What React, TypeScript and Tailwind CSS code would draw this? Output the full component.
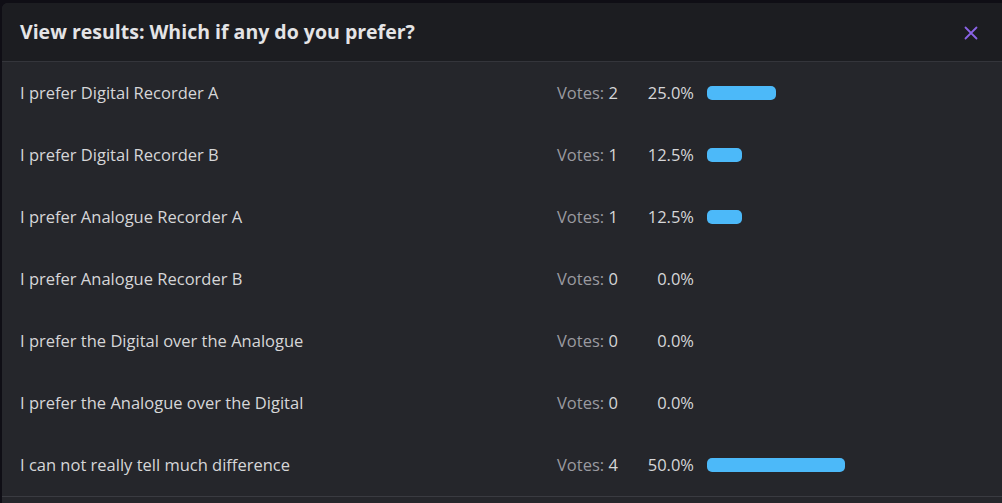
import React from 'react';

const rows = [
  { label: 'I prefer Digital Recorder A', votes: 2 },
  { label: 'I prefer Digital Recorder B', votes: 1 },
  { label: 'I prefer Analogue Recorder A', votes: 1 },
  { label: 'I prefer Analogue Recorder B', votes: 0 },
  { label: 'I prefer the Digital over the Analogue', votes: 0 },
  { label: 'I prefer the Analogue over the Digital', votes: 0 },
  { label: 'I can not really tell much difference', votes: 4 },
];

const total = rows.reduce((s, r) => s + r.votes, 0);

export default function App() {
  return (
    <div
      className="w-[1002px] h-[503px] bg-[#0f0e15] overflow-hidden pl-[2px] pt-[3px]"
      style={{ fontFamily: '"Open Sans", "Noto Sans", sans-serif' }}
    >
      <div className="h-[520px] bg-[#25262b] rounded-tl-[6px] overflow-hidden">
        <div className="h-[59px] bg-[#1c1d21] border-b border-[#34353b] flex items-center justify-between pl-[18px] pr-[24px]">
          <h2 className="text-[19.5px] font-bold text-[#e4e4e6]">
            View results: Which if any do you prefer?
          </h2>
          <svg width="14" height="14" viewBox="0 0 14 14" className="mt-[1px]">
            <path d="M1.5 1.5 L12.5 12.5 M12.5 1.5 L1.5 12.5" stroke="#8a63e6" strokeWidth="1.8" strokeLinecap="round" />
          </svg>
        </div>
        <div className="border-b border-[#3a3b41]">
          {rows.map((r) => {
            const pct = total ? (r.votes / total) * 100 : 0;
            return (
              <div key={r.label} className="h-[62px] flex items-center pl-[18px] pr-[19px] text-[16.5px]">
                <div className="flex-1 text-[#d6d6d8]">{r.label}</div>
                <div className="w-[61px] whitespace-nowrap text-[#9a9aa0]">
                  Votes: <span className="text-[#d6d6d8]">{r.votes}</span>
                </div>
                <div className="w-[60px] ml-[16px] text-right text-[#d6d6d8]">{pct.toFixed(1)}%</div>
                <div className="w-[276px] ml-[13px] h-[14px]">
                  {r.votes > 0 && (
                    <div className="h-full rounded-[5px] bg-[#4cb9f9]" style={{ width: `${pct * 2.76}px` }} />
                  )}
                </div>
              </div>
            );
          })}
        </div>
      </div>
    </div>
  );
}
